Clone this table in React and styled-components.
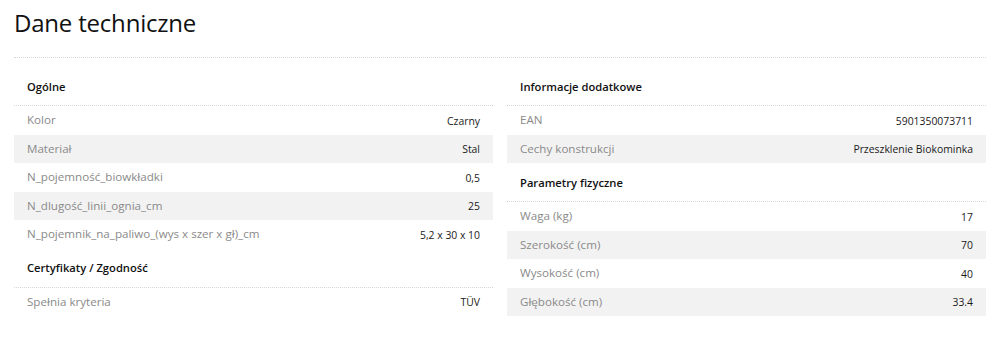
import React from "react";
import styled, { createGlobalStyle } from "styled-components";

const GlobalStyle = createGlobalStyle`
  body {
    margin: 0;
    background: #fff;
    font-family: "Open Sans", "Liberation Sans", sans-serif;
    color: #1a1a1a;
  }
`;

const left = [
  {
    title: "Ogólne",
    rows: [
      ["Kolor", "Czarny"],
      ["Materiał", "Stal"],
      ["N_pojemność_biowkładki", "0,5"],
      ["N_dlugość_linii_ognia_cm", "25"],
      ["N_pojemnik_na_paliwo_(wys x szer x gł)_cm", "5,2 x 30 x 10"],
    ],
  },
  {
    title: "Certyfikaty / Zgodność",
    rows: [["Spełnia kryteria", "TÜV"]],
  },
];

const right = [
  {
    title: "Informacje dodatkowe",
    rows: [
      ["EAN", "5901350073711"],
      ["Cechy konstrukcji", "Przeszklenie Biokominka"],
    ],
  },
  {
    title: "Parametry fizyczne",
    rows: [
      ["Waga (kg)", "17"],
      ["Szerokość (cm)", "70"],
      ["Wysokość (cm)", "40"],
      ["Głębokość (cm)", "33.4"],
    ],
  },
];

const Column = ({ sections }) => (
  <Col>
    {sections.map((s) => (
      <Section key={s.title}>
        <Header>{s.title}</Header>
        <Rows>
          {s.rows.map(([label, value]) => (
            <Row key={label}>
              <Label>{label}</Label>
              <Value>{value}</Value>
            </Row>
          ))}
        </Rows>
      </Section>
    ))}
  </Col>
);

const App = () => {
  return (
    <Page>
      <GlobalStyle />
      <Title>Dane techniczne</Title>
      <Grid>
        <Column sections={left} />
        <Column sections={right} />
      </Grid>
    </Page>
  );
};

export default App;

const Page = styled.div`
  padding: 0 14px;
`;
const Title = styled.h1`
  margin: 0;
  padding: 6px 0 17px;
  font-size: 24px;
  line-height: 34px;
  font-weight: 400;
  letter-spacing: -0.2px;
  color: #111;
  border-bottom: 1px dotted #d6d6d6;
`;
const Grid = styled.div`
  display: grid;
  grid-template-columns: 1fr 1fr;
  column-gap: 14px;
  margin-top: 9px;
`;
const Col = styled.div`
  display: flex;
  flex-direction: column;
`;
const Section = styled.div`
  display: flex;
  flex-direction: column;
`;
const Header = styled.div`
  height: 38px;
  display: flex;
  align-items: center;
  padding: 0 13px;
  font-size: 11.2px;
  font-weight: 600;
  color: #111;
  border-bottom: 1px dotted #d6d6d6;
`;
const Rows = styled.div`
  display: flex;
  flex-direction: column;
`;
const Row = styled.div`
  height: 28.5px;
  display: flex;
  align-items: center;
  justify-content: space-between;
  padding: 0 13px;
  font-size: 11.6px;
  line-height: 16px;
  &:nth-child(even) {
    background: #f2f2f2;
  }
`;
const Label = styled.span`
  color: #8a8a8a;
`;
const Value = styled.span`
  color: #1a1a1a;
  font-weight: 500;
  font-size: 10.4px;
  line-height: 16px;
  padding-top: 1px;
`;
